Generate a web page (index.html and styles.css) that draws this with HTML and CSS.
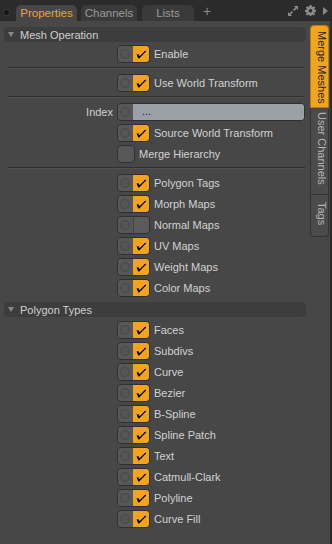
FILE: index.html
```html
<!DOCTYPE html>
<html>

<head>
    <title>Merge Meshes</title>
    <link rel="stylesheet" href="styles.css">
</head>

<body>
    <div id="tabbar">
        <span class="dot"></span>
        <div class="tab active">Properties</div>
        <div class="tab">Channels</div>
        <div class="tab tab-lists">Lists</div>
        <span class="add">+</span>
        <div class="tools">
            <svg width="10" height="10" viewBox="0 0 10 10">
                <path d="M6 0H10V4L8.6 2.6 6.2 5 5 3.8 7.4 1.4Z M4 10H0V6L1.4 7.4 3.8 5 5 6.2 2.6 8.6Z" fill="#8a8a8a" />
            </svg>
            <svg width="11" height="11" viewBox="0 0 11 11">
                <path d="M4.5 0H6.5L6.8 1.6 7.9 2.1 9.2 1.2 10.2 2.6 9.3 3.9 9.6 4.7 11 5V6.9L9.6 7.2 9.2 8.2 10.1 9.5 8.8 10.6 7.6 9.7 6.6 10.1 6.4 11H4.6L4.3 10.1 3.3 9.7 2.1 10.6 0.8 9.4 1.7 8.2 1.3 7.2 0 6.9V5L1.4 4.7 1.8 3.8 0.9 2.5 2.2 1.2 3.3 2.1 4.3 1.6Z" fill="#8a8a8a" />
                <circle cx="5.5" cy="5.8" r="1.8" fill="#2b2b2b" />
            </svg>
            <svg width="5" height="8" viewBox="0 0 5 8">
                <path d="M0 0L5 4 0 8Z" fill="#8a8a8a" />
            </svg>
        </div>
    </div>

    <div id="main">
        <div id="panel">
            <div class="group-header"><span class="tri"></span>Mesh Operation</div>

            <div class="row"><span class="key"></span><span class="toggle on"><span class="knob"></span><span class="box"></span></span><span class="text">Enable</span></div>
            <div class="sep"></div>
            <div class="row"><span class="key"></span><span class="toggle on"><span class="knob"></span><span class="box"></span></span><span class="text">Use World Transform</span></div>
            <div class="sep"></div>
            <div class="row"><span class="key">Index</span><span class="field"><span class="knob"></span><span class="value">...</span></span></div>
            <div class="row"><span class="key"></span><span class="toggle on"><span class="knob"></span><span class="box"></span></span><span class="text">Source World Transform</span></div>
            <div class="row"><span class="key"></span><span class="square"></span><span class="text">Merge Hierarchy</span></div>
            <div class="sep"></div>
            <div class="row"><span class="key"></span><span class="toggle on"><span class="knob"></span><span class="box"></span></span><span class="text">Polygon Tags</span></div>
            <div class="row"><span class="key"></span><span class="toggle on"><span class="knob"></span><span class="box"></span></span><span class="text">Morph Maps</span></div>
            <div class="row"><span class="key"></span><span class="toggle"><span class="knob"></span><span class="box"></span></span><span class="text">Normal Maps</span></div>
            <div class="row"><span class="key"></span><span class="toggle on"><span class="knob"></span><span class="box"></span></span><span class="text">UV Maps</span></div>
            <div class="row"><span class="key"></span><span class="toggle on"><span class="knob"></span><span class="box"></span></span><span class="text">Weight Maps</span></div>
            <div class="row"><span class="key"></span><span class="toggle on"><span class="knob"></span><span class="box"></span></span><span class="text">Color Maps</span></div>

            <div class="group-header second"><span class="tri"></span>Polygon Types</div>

            <div class="row"><span class="key"></span><span class="toggle on"><span class="knob"></span><span class="box"></span></span><span class="text">Faces</span></div>
            <div class="row"><span class="key"></span><span class="toggle on"><span class="knob"></span><span class="box"></span></span><span class="text">Subdivs</span></div>
            <div class="row"><span class="key"></span><span class="toggle on"><span class="knob"></span><span class="box"></span></span><span class="text">Curve</span></div>
            <div class="row"><span class="key"></span><span class="toggle on"><span class="knob"></span><span class="box"></span></span><span class="text">Bezier</span></div>
            <div class="row"><span class="key"></span><span class="toggle on"><span class="knob"></span><span class="box"></span></span><span class="text">B-Spline</span></div>
            <div class="row"><span class="key"></span><span class="toggle on"><span class="knob"></span><span class="box"></span></span><span class="text">Spline Patch</span></div>
            <div class="row"><span class="key"></span><span class="toggle on"><span class="knob"></span><span class="box"></span></span><span class="text">Text</span></div>
            <div class="row"><span class="key"></span><span class="toggle on"><span class="knob"></span><span class="box"></span></span><span class="text">Catmull-Clark</span></div>
            <div class="row"><span class="key"></span><span class="toggle on"><span class="knob"></span><span class="box"></span></span><span class="text">Polyline</span></div>
            <div class="row"><span class="key"></span><span class="toggle on"><span class="knob"></span><span class="box"></span></span><span class="text">Curve Fill</span></div>
        </div>

        <div id="side-tabs">
            <div class="side-tab active">Merge Meshes</div>
            <div class="side-tab">User Channels</div>
            <div class="side-tab last">Tags</div>
        </div>
    </div>
</body>

</html>
```

FILE: styles.css
```css
body {
    margin: 0;
    padding: 0;
    width: 332px;
    height: 544px;
    overflow: hidden;
    background-color: #2b2b2b;
    font-family: "Liberation Sans", Arial, sans-serif;
    font-size: 11px;
    color: #d2d2d2;
}

#tabbar {
    display: flex;
    align-items: flex-end;
    height: 21px;
    background-color: #2b2b2b;
}

.dot {
    width: 5px;
    height: 5px;
    margin: 0 7px 6px 4px;
    border-radius: 50%;
    background-color: #151515;
    box-shadow: 0 0 0 1px #3a3a3a;
}

.tab {
    box-sizing: border-box;
    height: 16px;
    width: 56px;
    margin-right: 5px;
    padding-top: 2px;
    text-align: center;
    background-color: #3a3a3a;
    color: #9a9a9a;
    border-radius: 5px 5px 0 0;
    font-size: 11.5px;
}

.tab.active {
    width: 61px;
    margin-right: 4px;
    background-color: #474747;
    color: #f2a41c;
}

.tab.tab-lists {
    width: 52px;
}

.add {
    margin: 0 0 2px 4px;
    font-size: 14px;
    color: #8a8a8a;
}

.tools {
    display: flex;
    align-items: center;
    gap: 7px;
    margin: 0 4px 5px auto;
}

#main {
    display: flex;
    height: 523px;
}

#panel {
    display: flex;
    flex-direction: column;
    gap: 3px;
    width: 310px;
    padding-top: 6px;
    background-color: #474747;
}

#side-tabs {
    display: flex;
    flex-direction: column;
    width: 20px;
    padding-top: 4px;
    margin-right: 2px;
    background-color: #474747;
}

.side-tab {
    box-sizing: border-box;
    writing-mode: vertical-rl;
    width: 19px;
    padding: 4px 0 0 3px;
    background-color: #4b4b4b;
    border: 1px solid #333;
    border-top: none;
    color: #b5b5b5;
    font-size: 11px;
}

.side-tab.active {
    height: 83px;
    padding-top: 5px;
    background-color: #f2a41c;
    border-color: #b87a10;
    color: #2a2a2a;
    border-radius: 4px 4px 0 0;
    border-top: 1px solid #b87a10;
}

.side-tab:nth-child(2) {
    height: 87px;
}

.side-tab.last {
    height: 42px;
    padding-top: 7px;
    border-radius: 0 0 4px 4px;
}

.group-header {
    display: flex;
    align-items: center;
    height: 15px;
    margin: 0 4px;
    padding-left: 4px;
    background-color: #3d3d3d;
    border-radius: 4px;
    color: #d0d0d0;
    font-size: 11px;
}

.group-header.second {
    margin-top: 2px;
    margin-bottom: 1px;
}

.tri {
    width: 0;
    height: 0;
    margin-right: 6px;
    border-left: 3px solid transparent;
    border-right: 3px solid transparent;
    border-top: 5px solid #888;
}

.row {
    display: flex;
    align-items: center;
    height: 18px;
}

.key {
    flex: none;
    width: 113px;
    margin-right: 4px;
    text-align: right;
    color: #cfcfcf;
}

.text {
    margin-left: 4px;
}

.sep {
    height: 0;
    margin: 1px 5px 2px 8px;
    border-top: 1px solid #2f2f2f;
    border-bottom: 1px solid #525252;
}

.toggle {
    display: flex;
    box-sizing: border-box;
    width: 33px;
    height: 18px;
    border: 1px solid #303030;
    border-radius: 4px;
    overflow: hidden;
}

.knob {
    position: relative;
    flex: none;
    width: 15px;
    height: 16px;
    background-color: #575757;
}

.knob::after {
    content: "";
    position: absolute;
    left: 2px;
    top: 3px;
    width: 8px;
    height: 8px;
    border: 1px solid #484848;
    border-radius: 50%;
    background-color: #555;
}

.box {
    flex: 1;
    background-color: #5b5b5b;
    border-left: 1px solid #444;
}

.toggle.on .box {
    border-left: none;
    background-color: #f2a41c;
    background-image: url("data:image/svg+xml,%3Csvg xmlns='http://www.w3.org/2000/svg' width='17' height='16' viewBox='0 0 17 16'%3E%3Cpath d='M3.5 8.6L5.6 8.2 6.6 10.3 12.3 4.6 13.1 5.4 6.2 12.4 5.3 12.4Z' fill='%23000'/%3E%3C/svg%3E");
    background-repeat: no-repeat;
}

.square {
    box-sizing: border-box;
    width: 18px;
    height: 18px;
    background-color: #575757;
    border: 1px solid #303030;
    border-radius: 4px;
}

.field {
    display: flex;
    box-sizing: border-box;
    flex: 1;
    height: 18px;
    margin-right: 5px;
    border: 1px solid #303030;
    border-radius: 4px;
    overflow: hidden;
}

.value {
    flex: 1;
    padding-left: 9px;
    line-height: 14px;
    background-color: #9aa0a6;
    color: #1e1e1e;
}
```
